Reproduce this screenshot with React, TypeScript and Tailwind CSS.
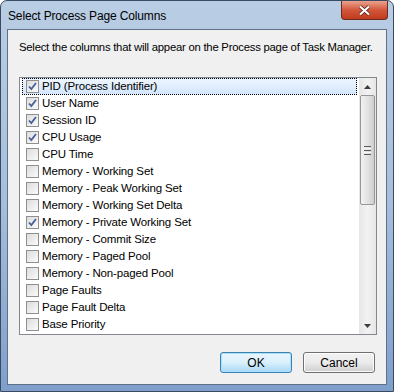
import React from 'react';

const items: { label: string; checked: boolean }[] = [
  { label: 'PID (Process Identifier)', checked: true },
  { label: 'User Name', checked: true },
  { label: 'Session ID', checked: true },
  { label: 'CPU Usage', checked: true },
  { label: 'CPU Time', checked: false },
  { label: 'Memory - Working Set', checked: false },
  { label: 'Memory - Peak Working Set', checked: false },
  { label: 'Memory - Working Set Delta', checked: false },
  { label: 'Memory - Private Working Set', checked: true },
  { label: 'Memory - Commit Size', checked: false },
  { label: 'Memory - Paged Pool', checked: false },
  { label: 'Memory - Non-paged Pool', checked: false },
  { label: 'Page Faults', checked: false },
  { label: 'Page Fault Delta', checked: false },
  { label: 'Base Priority', checked: false },
];

const CheckBox = ({ checked }: { checked: boolean }) => (
  <div className="flex h-[13px] w-[13px] shrink-0 items-center justify-center border border-[#8e8f8f] bg-gradient-to-br from-[#dcdcdc] to-[#fbfbfb]">
    {checked && (
      <svg width="9" height="9" viewBox="0 0 9 9">
        <path d="M1 4.5 L3.3 7 L8 1" fill="none" stroke="#4a5f97" strokeWidth="1.8" />
      </svg>
    )}
  </div>
);

const Row = ({ label, checked, focused }: { label: string; checked: boolean; focused?: boolean }) => (
  <div
    className={
      focused
        ? 'mx-[2px] flex h-[17px] items-center gap-[3px] border border-dotted border-black bg-gradient-to-b from-[#eef5fe] to-[#d3e6fd] pl-[3px]'
        : 'mx-[2px] flex h-[17px] items-center gap-[3px] border border-transparent pl-[3px]'
    }
  >
    <CheckBox checked={checked} />
    <span className="whitespace-nowrap text-[11.5px] leading-none tracking-[-0.15px] text-black">{label}</span>
  </div>
);

const ScrollBar = () => (
  <div className="flex w-[17px] shrink-0 flex-col bg-gradient-to-r from-[#e6e6e6] via-[#f2f2f2] to-[#e6e6e6]">
    <div className="flex h-[17px] items-center justify-center">
      <svg width="7" height="4" viewBox="0 0 7 4">
        <path d="M0 4 L3.5 0 L7 4 Z" fill="#3c3c3c" />
      </svg>
    </div>
    <div className="mx-[1px] flex h-[110px] items-center justify-center rounded-[2px] border border-[#979797] bg-gradient-to-r from-[#f2f2f2] via-[#e2e2e2] to-[#cfcfcf]">
      <div className="flex flex-col gap-[1px]">
        <div className="h-[1px] w-[7px] bg-[#5c5c5c]" />
        <div className="h-[1px] w-[7px] bg-[#f8f8f8]" />
        <div className="h-[1px] w-[7px] bg-[#5c5c5c]" />
        <div className="h-[1px] w-[7px] bg-[#f8f8f8]" />
        <div className="h-[1px] w-[7px] bg-[#5c5c5c]" />
      </div>
    </div>
    <div className="flex-1" />
    <div className="flex h-[17px] items-center justify-center">
      <svg width="7" height="4" viewBox="0 0 7 4">
        <path d="M0 0 L3.5 4 L7 0 Z" fill="#3c3c3c" />
      </svg>
    </div>
  </div>
);

export default function App() {
  return (
    <div
      className="h-[392px] w-[394px] overflow-hidden rounded-t-[7px] border border-[#3a4a60] bg-gradient-to-b from-[#b9cde4] via-[#a7bfdc] to-[#7f9fcb]"
      style={{ fontFamily: '"Liberation Sans", Arial, sans-serif' }}
    >
      <div className="flex h-[28px] items-start justify-between">
        <div className="pl-[7px] pt-[6px] text-[12px] tracking-[-0.15px] text-black">Select Process Page Columns</div>
        <div className="mr-[5px] flex h-[19px] w-[47px] items-center justify-center rounded-b-[4px] border border-t-0 border-[#6b2d22] bg-gradient-to-b from-[#e7a28f] via-[#d2563a] to-[#c13a1c]">
          <svg width="13" height="11" viewBox="0 0 13 11">
            <path d="M2 1.5 L11 9.5 M11 1.5 L2 9.5" stroke="#4a1b12" strokeWidth="3.6" />
            <path d="M2 1.5 L11 9.5 M11 1.5 L2 9.5" stroke="#ffffff" strokeWidth="2.2" />
          </svg>
        </div>
      </div>
      <div className="mx-[6px] h-[356px] border border-[#5f7188] bg-[#f0f0f0]">
        <div className="whitespace-nowrap pl-[11px] pt-[10px] text-[11.3px] leading-[15px] tracking-[-0.23px] text-black">
          Select the columns that will appear on the Process page of Task Manager.
        </div>
        <div className="ml-[11px] mt-[22px] flex h-[258px] w-[358px] border border-[#828790] bg-white">
          <div className="flex-1">
            {items.map((it, i) => (
              <Row key={it.label} label={it.label} checked={it.checked} focused={i === 0} />
            ))}
          </div>
          <ScrollBar />
        </div>
        <div className="mt-[17px] flex justify-end gap-[11px] pr-[11px]">
          <button className="h-[21px] w-[72px] rounded-[3px] border border-[#3c7fb1] bg-gradient-to-b from-[#eaf6fd] via-[#d9f0fc] to-[#a7d9f5] text-[12px] text-black shadow-[inset_0_0_0_1px_#a7e1fb]">
            OK
          </button>
          <button className="h-[21px] w-[72px] rounded-[3px] border border-[#707070] bg-gradient-to-b from-[#f2f2f2] via-[#ebebeb] to-[#cfcfcf] text-[12px] text-black shadow-[inset_0_0_0_1px_#fcfcfc]">
            Cancel
          </button>
        </div>
      </div>
    </div>
  );
}
